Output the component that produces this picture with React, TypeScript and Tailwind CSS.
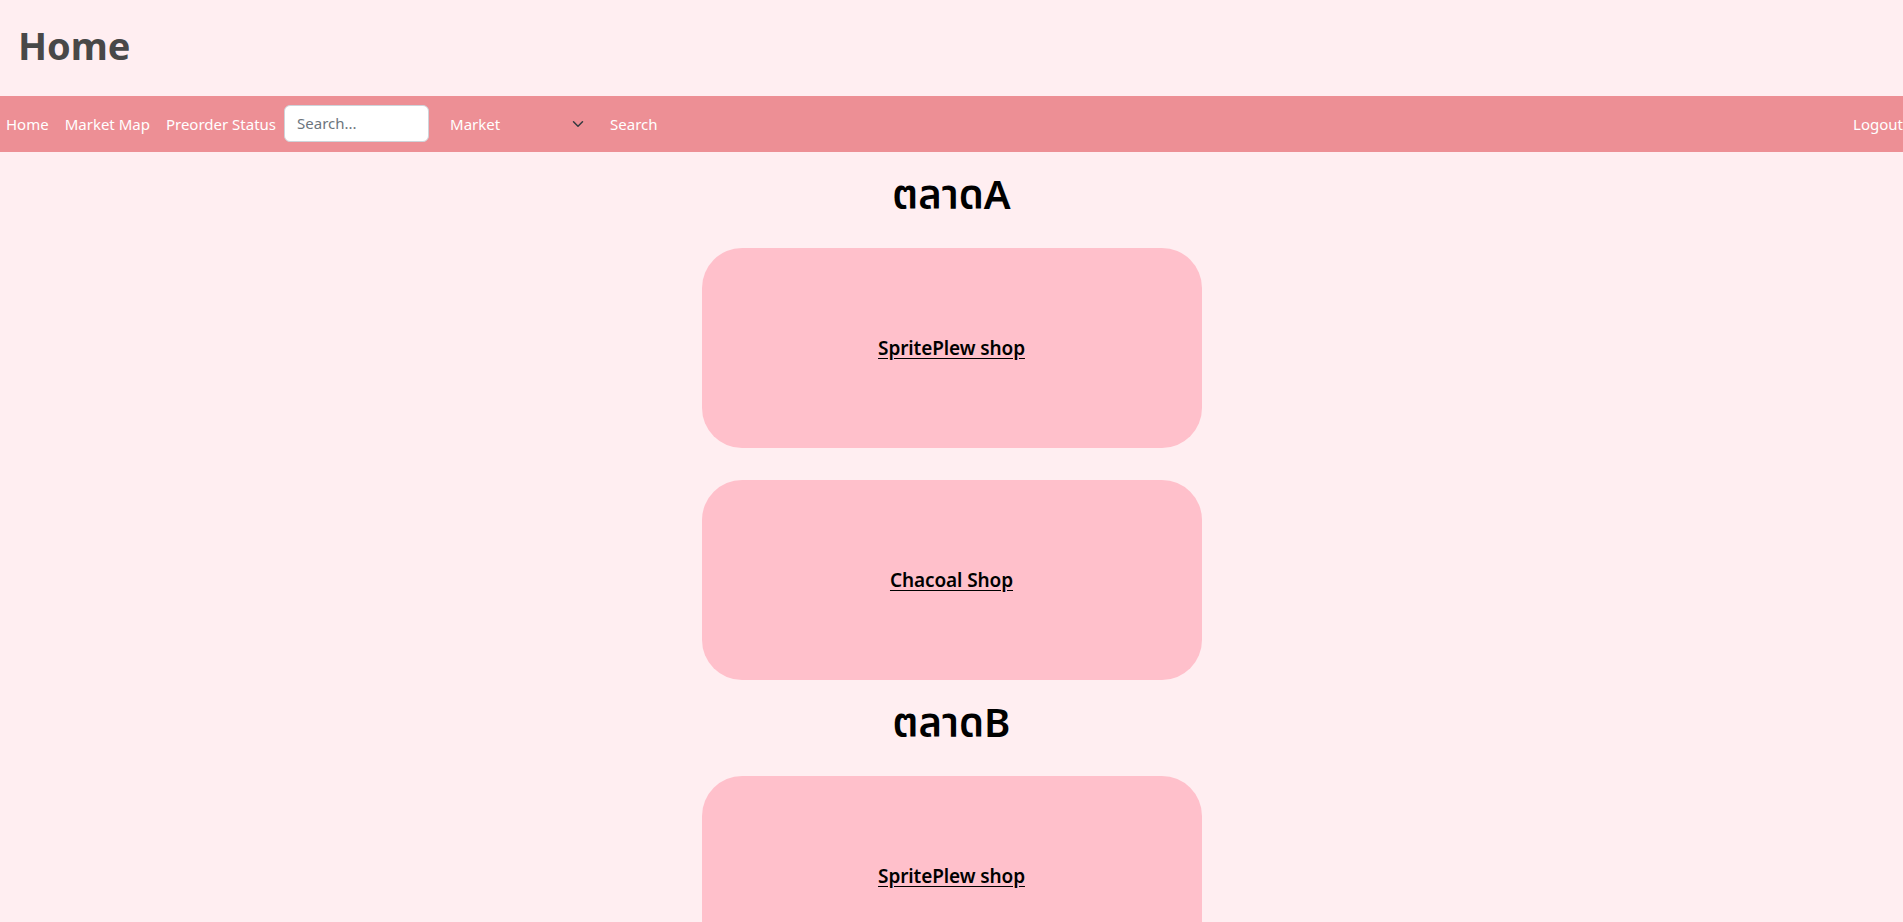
import { useState } from 'react';

const FONT = { fontFamily: '"Segoe UI", "Noto Sans", "Noto Sans Thai", Tahoma, sans-serif' };

const MARKETS = [
  { name: 'ตลาดA', shops: ['SpritePlew shop', 'Chacoal Shop'] },
  { name: 'ตลาดB', shops: ['SpritePlew shop', 'Chacoal Shop'] },
];

function Chevron() {
  return (
    <svg width="16" height="12" viewBox="0 0 16 16" className="text-[#343a40]">
      <path d="m2 5 6 6 6-6" fill="none" stroke="currentColor" strokeWidth="2" strokeLinecap="round" strokeLinejoin="round" />
    </svg>
  );
}

function NavBar() {
  const [query, setQuery] = useState('');
  return (
    <nav className="flex h-[56px] items-center bg-[#ed8f95] text-[15px] text-white">
      <a href="#" className="pl-[6px] pr-[8px]">Home</a>
      <a href="#" className="px-[8px]">Market Map</a>
      <a href="#" className="px-[8px]">Preorder Status</a>
      <input
        value={query}
        onChange={(e) => setQuery(e.target.value)}
        placeholder="Search..."
        className="mb-[2px] h-[37px] w-[145px] rounded-md border border-[#ced4da] bg-white px-3 text-[15px] text-[#212529] placeholder:text-[#6c757d] outline-none"
      />
      <div className="ml-[9px] flex w-[160px] items-center justify-between pl-3 pr-3">
        <span>Market</span>
        <Chevron />
      </div>
      <button className="px-3">Search</button>
      <a href="#" className="ml-auto">Logout</a>
    </nav>
  );
}

function ShopCard({ name }: { name: string }) {
  return (
    <div className="flex h-[200px] w-[500px] items-center justify-center rounded-[40px] bg-[#ffc0cb]">
      <a href="#" className="text-[19px] font-semibold tracking-[-0.1px] text-black underline underline-offset-[3px]">
        {name}
      </a>
    </div>
  );
}

export default function App() {
  return (
    <div className="min-h-screen bg-[#ffeef1]" style={FONT}>
      <header className="flex h-[96px] items-center px-[18px] pb-[6px]">
        <h1 className="text-[38px] font-bold text-[#484848]">Home</h1>
      </header>
      <NavBar />
      <main className="flex flex-col items-center">
        {MARKETS.map((m) => (
          <section key={m.name} className="flex flex-col items-center pt-[19px]">
            <h2 className="mb-[31px] text-[40px] leading-[46px] font-semibold text-black">{m.name}</h2>
            <div className="flex flex-col gap-8">
              {m.shops.map((s, i) => (
                <ShopCard key={i} name={s} />
              ))}
            </div>
          </section>
        ))}
      </main>
    </div>
  );
}
